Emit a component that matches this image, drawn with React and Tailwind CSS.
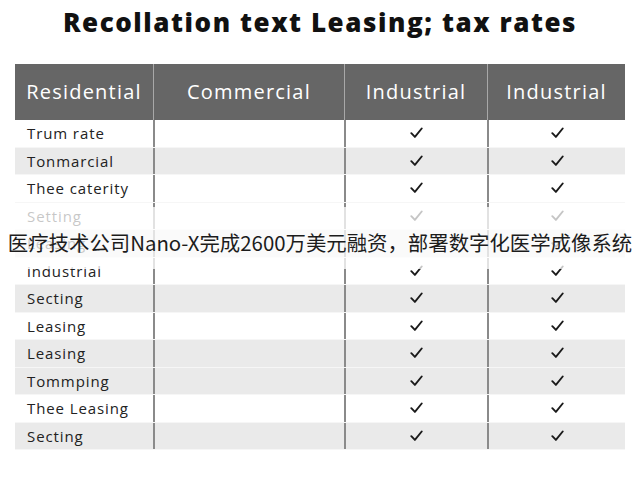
import React from 'react'

const rows = [
  { name: 'Trum rate', shade: false },
  { name: 'Tonmarcial', shade: true },
  { name: 'Thee caterity', shade: false },
  { name: 'Setting', shade: false },
  { name: 'Leasing', shade: true },
  { name: 'industrial', shade: false },
  { name: 'Secting', shade: true },
  { name: 'Leasing', shade: false },
  { name: 'Leasing', shade: true },
  { name: 'Tommping', shade: true },
  { name: 'Thee Leasing', shade: false },
  { name: 'Secting', shade: true },
]

function Check() {
  return (
    <svg width="13" height="12" viewBox="0 0 13 12" fill="none">
      <path d="M1.3 6.2 L4.9 9.9 L11.7 1.5" stroke="#1a1a1a" strokeWidth="1.9" strokeLinecap="round" strokeLinejoin="round" />
    </svg>
  )
}

export default function App() {
  return (
    <div className="relative w-[640px] h-[480px] bg-white font-['Open_Sans',sans-serif] overflow-hidden">
      <div className="h-[44px] flex items-center justify-center">
        <h1 className="text-[26px] font-extrabold text-[#111] tracking-[0.06em]">
          Recollation text Leasing; tax rates
        </h1>
      </div>

      <div className="mx-[15px] mt-[20px] w-[610px]">
        <div className="grid grid-cols-[138px_191px_143px_138px] h-[56px] bg-[#666666] text-white text-[20px] tracking-[0.06em]">
          <div className="flex items-center justify-center">Residential</div>
          <div className="flex items-center justify-center border-l border-[#a8a8a8]">Commercial</div>
          <div className="flex items-center justify-center border-l border-[#a8a8a8]">Industrial</div>
          <div className="flex items-center justify-center border-l border-[#a8a8a8]">Industrial</div>
        </div>

        {rows.map((row, i) => (
          <div
            key={i}
            className={`grid grid-cols-[138px_191px_143px_138px] h-[27.5px] border-b border-[#f6f6f6] text-[15px] text-[#222] tracking-[0.06em] ${row.shade ? 'bg-[#eaeaea]' : 'bg-white'}`}
          >
            <div className="flex items-center pl-[12px]">{row.name}</div>
            <div className="border-l-2 border-[#8a8a8a]"></div>
            <div className="flex items-center justify-center border-l-2 border-[#8a8a8a]">
              <Check />
            </div>
            <div className="flex items-center justify-center border-l-2 border-[#8a8a8a]">
              <Check />
            </div>
          </div>
        ))}
      </div>

      <div className="absolute left-0 right-0 top-[207px] h-[62px] bg-white/75"></div>
      <div className="absolute left-0 right-0 top-[228px] h-[28px] flex items-center justify-center">
        <span className="text-[20.4px] text-[#1c1c1c] font-['Noto_Sans_CJK_SC',sans-serif] whitespace-nowrap">
          医疗技术公司Nano-X完成2600万美元融资，部署数字化医学成像系统
        </span>
      </div>
    </div>
  )
}
